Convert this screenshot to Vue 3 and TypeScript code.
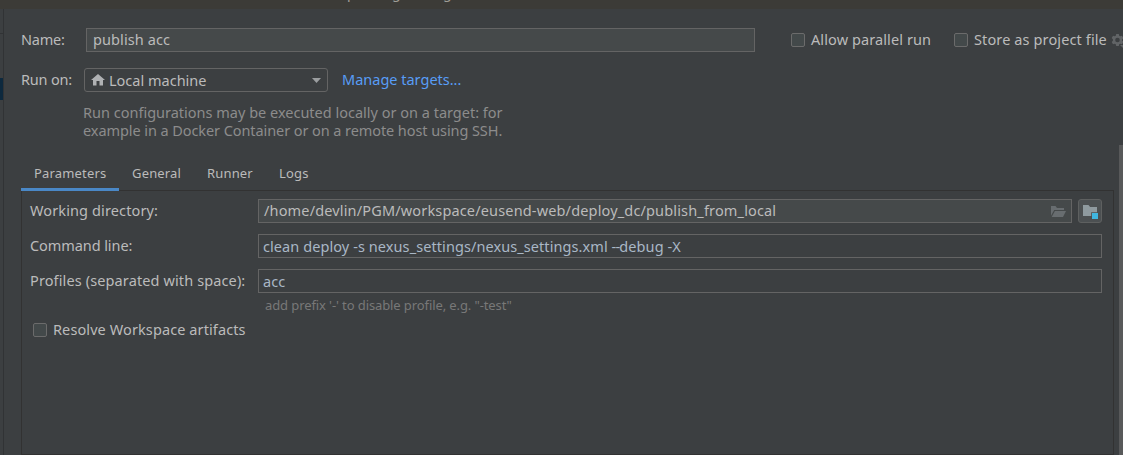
<script setup lang="ts">
import { ref } from 'vue'

interface Tab { id: string; label: string }

const tabs: Tab[] = [
  { id: 'parameters', label: 'Parameters' },
  { id: 'general', label: 'General' },
  { id: 'runner', label: 'Runner' },
  { id: 'logs', label: 'Logs' },
]
const activeTab = ref('parameters')
const allowParallel = ref(false)
const storeAsFile = ref(false)
const resolveArtifacts = ref(false)
</script>

<template>
  <div class="window">
    <header class="titlebar"><span class="tp">p</span><span class="tg">g</span><span>g</span></header>
    <div class="body">
      <aside class="tree"><div class="tree-line"></div><div class="tree-selected"></div></aside>
      <main class="editor">
        <div class="row name-row">
          <label class="name-label s-name">Name:</label>
          <div class="field name-field s1">publish acc</div>
          <label class="check parallel" @click="allowParallel = !allowParallel">
            <span class="box"></span><span class="s1">Allow parallel run</span>
          </label>
          <label class="check store" @click="storeAsFile = !storeAsFile">
            <span class="box"></span><span class="s12">Store as project file</span>
          </label>
          <svg class="gear" width="16" height="16" viewBox="0 0 16 16">
            <path fill="#616466" fill-rule="evenodd" d="M5.200 1h2.600l.4 1.700 1.100.6L11 2.800l1.300 2.300-1.200 1.200v1.400l1.200 1.200L11 11.200l-1.700-.5-1.100.6-.4 1.700H5.200l-.4-1.700-1.100-.6-1.700.5L.7 8.900l1.200-1.200V6.300L.7 5.100 2 2.800l1.700.5 1.100-.6zM6.500 4.700a2.300 2.300 0 1 0 0 4.600 2.300 2.300 0 0 0 0-4.600z" />
            <path fill="#616466" d="M9 12h6l-3 3z" />
          </svg>
        </div>
        <div class="row run-row">
          <label class="run-label s-name">Run on:</label>
          <div class="combo">
            <svg class="home" width="14" height="12" viewBox="0 0 14 12"><path fill="#afb1b3" d="M7 0l7 6h-2v5.500H8.500V7h-3v4.500H2V6H0z" /></svg>
            <span class="combo-text">Local machine</span>
            <svg class="arrow" width="9" height="5" viewBox="0 0 9 5"><path fill="#9b9ea0" d="M0 0h9L4.500 5z" /></svg>
          </div>
          <a class="link">Manage targets...</a>
        </div>
        <div class="help">
          <div>Run configurations may be executed locally or on a target: for</div>
          <div class="s-tight">example in a Docker Container or on a remote host using SSH.</div>
        </div>
        <nav class="tabs">
          <div
            v-for="tab in tabs"
            :key="tab.id"
            class="tab"
            :class="[tab.id, { active: tab.id === activeTab }]"
            @click="activeTab = tab.id"
          >{{ tab.label }}</div>
        </nav>
        <section class="panel">
          <div class="row form-row">
            <label class="form-label s12">Working directory:</label>
            <div class="field grow dir">
              <span class="s17">/home/devlin/PGM/workspace/eusend-web/deploy_dc/publish_from_local</span>
              <svg class="folder-open" width="15" height="11" viewBox="0 0 15 11"><path fill="#686d70" d="M0 0h4.500l1.500 2h7v2H3.200L0 9.800z" /><path fill="#686d70" d="M3.900 5H15l-3 6H.7z" /></svg>
            </div>
            <button class="browse">
              <svg width="16" height="15" viewBox="0 0 16 15"><path fill="#8f9a9f" d="M0 0h5.500l1.600 2H14v5.200H8.200V11H0z" /><path fill="#40b6e0" d="M9 8h6v6H9z" /></svg>
            </button>
          </div>
          <div class="row form-row">
            <label class="form-label s-tight">Command line:</label>
            <div class="field grow code"><span>clean deploy -s nexus_settings/nexus_settings.xml <span class="dashes">--</span>debug -X</span></div>
          </div>
          <div class="row form-row">
            <label class="form-label s12">Profiles (separated with space):</label>
            <div class="field grow code">acc</div>
          </div>
          <div class="hint">add prefix '-' to disable profile, e.g. "-test"</div>
          <label class="check resolve" @click="resolveArtifacts = !resolveArtifacts">
            <span class="box"></span><span class="s1">Resolve Workspace artifacts</span>
          </label>
        </section>
      </main>
      <div class="scrollbar"></div>
    </div>
  </div>
</template>

<style>
body { background: #3c3f41; }
</style>

<style scoped>
* { box-sizing: border-box; }
.window {
  display: flex;
  flex-direction: column;
  width: 1123px;
  height: 455px;
  overflow: hidden;
  background: #3c3f41;
  color: #bbbbbb;
  font: 14.5px/18px "Noto Sans", "Open Sans", sans-serif;
  white-space: nowrap;
}
.titlebar {
  display: flex;
  height: 9px;
  padding-left: 347px;
  overflow: hidden;
  background: #3c3b37;
  color: #a09e98;
  font-size: 14px;
  line-height: 0;
}
.titlebar span { width: 51px; margin-top: -7px; }
.titlebar .tp { width: 45px; }
.body { display: flex; height: 446px; }
.tree { width: 4px; flex: none; border-right: 1px solid #313335; }
.tree-line { height: 1px; margin-top: 24px; background: #313335; }
.tree-selected { height: 22px; margin-top: 44px; background: #0d293e; }
.editor { width: 1115px; flex: none; padding: 19px 0 0 17px; }
.row { display: flex; align-items: center; }
.row > * { flex-shrink: 0; }
.name-row { height: 24px; }
.name-label { width: 65px; padding-bottom: 2px; }
.field {
  display: flex;
  align-items: center;
  height: 24px;
  border: 1px solid #646464;
  background: #45494a;
  padding: 0 0 2px 5px;
}
.name-field { width: 669px; padding-left: 6px; }
.check { display: flex; align-items: center; gap: 6px; }
.check span:last-child { padding-bottom: 2px; }
.box { width: 14px; height: 14px; border: 1px solid #6b6b6b; border-radius: 2px; background: #43494a; }
.parallel { width: 163px; margin-left: 36px; }
.store { width: 157px; }
.gear { overflow: visible; margin-top: 2px; }
.run-row { height: 24px; margin-top: 16px; }
.run-label { width: 63px; padding-bottom: 2px; }
.combo {
  display: flex;
  align-items: center;
  width: 244px;
  height: 24px;
  border: 1px solid #646464;
  border-radius: 3px;
  padding: 0 6px;
}
.home { margin: -1px 4px 0 0; }
.combo-text { letter-spacing: 0; }
.arrow { margin: 1px 0 0 auto; }
.link { margin-left: 14px; padding-bottom: 2px; color: #589df6; }
.help { margin: 11px 0 0 62px; color: #8c8c8c; }
.tabs { display: flex; height: 34px; margin-top: 18px; }
.tab { padding: 7px 0 0 13px; font-size: 13px; letter-spacing: 0.17px; }
.tab.parameters { width: 98px; }
.tab.general { width: 75px; }
.tab.runner { width: 72px; }
.tab.logs { width: 56px; }
.tab.active { position: relative; z-index: 1; border-bottom: 3px solid #4a88c7; }
.panel {
  width: 1093px;
  height: 265px;
  margin-top: -1px;
  padding: 8px 11px 0 8px;
  border: 1px solid #323232;
}
.form-row { height: 24px; margin-bottom: 11px; }
.form-label { width: 228px; padding-bottom: 2px; }
.grow { flex: 1; }
.code { background: #3c3f41; color: #a9b7c6; padding: 0 0 0 4px; letter-spacing: 0.08px; }
.dashes { letter-spacing: -0.8px; }
.folder-open { margin: 3px 5px 0 auto; }
.browse {
  display: flex;
  align-items: flex-start;
  width: 24px;
  height: 24px;
  margin-left: 6px;
  padding: 5px 0 0 4px;
  border: 1px solid #5e6060;
  border-radius: 3px;
  background: #4c5052;
}
.hint { margin: -8px 0 0 235px; font-size: 13px; line-height: 18px; letter-spacing: -0.1px; color: #787878; }
.resolve { margin: 6px 0 0 3px; }
.scrollbar { width: 4px; height: 310px; margin-top: 136px; background: #58595a; }
.s-name { letter-spacing: -0.2px; }
.s-tight { letter-spacing: -0.08px; }
.s1 { letter-spacing: 0.1px; }
.s12 { letter-spacing: 0.12px; }
.s17 { letter-spacing: 0.155px; }
</style>
